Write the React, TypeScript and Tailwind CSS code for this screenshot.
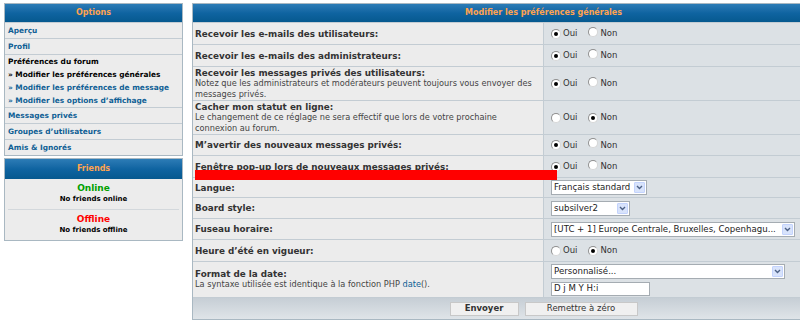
import React from 'react';

const font = "font-['DejaVu_Sans',Verdana,sans-serif]";

const Radio = ({ checked }: { checked?: boolean }) => (
  <span className="inline-flex h-[10px] w-[10px] shrink-0 items-center justify-center rounded-full border border-[#8f8f8f] border-b-[#d6d6d6] border-r-[#d6d6d6] bg-white">
    {checked && <span className="h-[4px] w-[4px] rounded-full bg-black" />}
  </span>
);

const YesNo = ({ yes }: { yes: boolean }) => (
  <div className="flex items-center text-[8.5px] text-[#333]">
    <Radio checked={yes} />
    <span className="ml-[2px]">Oui</span>
    <span className="ml-[11px]">
      <Radio checked={!yes} />
    </span>
    <span className="ml-[2px]">Non</span>
  </div>
);

const Select = ({ value, className }: { value: string; className: string }) => (
  <div className={`flex h-[15px] items-center justify-between border border-[#a5acb2] bg-white pl-[2px] pr-px text-[8.6px] text-[#222] ${className}`}>
    <span className="truncate">{value}</span>
    <span className="flex h-[11px] w-[11px] shrink-0 items-center justify-center rounded-[1px] border border-[#c3d3fd] bg-[#d8e3fb]">
      <svg width="7" height="5" viewBox="0 0 7 5">
        <path d="M1 1 L3.5 3.5 L6 1" fill="none" stroke="#4d6185" strokeWidth="1.4" />
      </svg>
    </span>
  </div>
);

const Header = ({ title, h = 'h-[18px]' }: { title: string; h?: string }) => (
  <div className={`flex ${h} items-center justify-center bg-gradient-to-b from-[#2c7cb6] via-[#0f64a1] to-[#06598f] text-[8px] font-bold text-[#ffa34f]`}>
    {title}
  </div>
);

const Label = ({ title, desc, h }: { title: string; desc?: React.ReactNode; h: string }) => (
  <div className={`flex ${h} flex-col justify-center bg-[#ececec] px-[2px]`}>
    <div className="text-[8.8px] font-bold leading-[10px] text-[#333]">{title}</div>
    {desc && <div className="text-[8.2px] leading-[11px] text-[#444]">{desc}</div>}
  </div>
);

const rows: { title: string; desc?: React.ReactNode; h: string; input: React.ReactNode }[] = [
  { title: 'Recevoir les e-mails des utilisateurs:', h: 'h-[21px]', input: <YesNo yes /> },
  { title: 'Recevoir les e-mails des administrateurs:', h: 'h-[21px]', input: <YesNo yes /> },
  {
    title: 'Recevoir les messages privés des utilisateurs:',
    desc: 'Notez que les administrateurs et modérateurs peuvent toujours vous envoyer des messages privés.',
    h: 'h-[33px]',
    input: <YesNo yes />,
  },
  {
    title: 'Cacher mon statut en ligne:',
    desc: 'Le changement de ce réglage ne sera effectif que lors de votre prochaine connexion au forum.',
    h: 'h-[33px]',
    input: <YesNo yes={false} />,
  },
  { title: 'M’avertir des nouveaux messages privés:', h: 'h-[20px]', input: <YesNo yes /> },
  { title: 'Fenêtre pop-up lors de nouveaux messages privés:', h: 'h-[21px]', input: <YesNo yes /> },
  { title: 'Langue:', h: 'h-[19px]', input: <Select value="Français standard" className="w-[96px]" /> },
  { title: 'Board style:', h: 'h-[20px]', input: <Select value="subsilver2" className="w-[79px]" /> },
  {
    title: 'Fuseau horaire:',
    h: 'h-[20px]',
    input: <Select value="[UTC + 1] Europe Centrale, Bruxelles, Copenhagu..." className="w-[244px]" />,
  },
  { title: 'Heure d’été en vigueur:', h: 'h-[21px]', input: <YesNo yes={false} /> },
  {
    title: 'Format de la date:',
    desc: (
      <>
        La syntaxe utilisée est identique à la fonction PHP <span className="text-[#0f5f95]">date</span>().
      </>
    ),
    h: 'h-[35px]',
    input: (
      <div className="flex flex-col gap-[3px]">
        <Select value="Personnalisé..." className="w-[234px]" />
        <div className="flex h-[14px] w-[99px] items-center border border-[#a5acb2] bg-white pl-[2px] text-[8.6px] text-[#222]">
          D j M Y H:i
        </div>
      </div>
    ),
  },
];

const SideRow = ({ children, h = 'h-[15px]' }: { children: React.ReactNode; h?: string }) => (
  <div className={`flex ${h} items-center bg-[#ececec] px-[3px] text-[7.4px] font-bold text-[#0f5f95]`}>{children}</div>
);

export default function App() {
  return (
    <div className={`flex h-[324px] w-[800px] items-start gap-[9px] overflow-hidden bg-white pl-[4px] pt-[3px] ${font}`}>
      {/* Sidebar */}
      <div className="flex w-[179px] shrink-0 flex-col gap-[2px]">
        <div className="flex flex-col gap-px border border-[#a9b8c2] bg-[#c3ccd3]">
          <Header title="Options" />
          <SideRow>Aperçu</SideRow>
          <SideRow>Profil</SideRow>
          <div className="flex h-[52px] flex-col justify-center gap-[1px] bg-[#ececec] px-[3px] text-[7.4px] font-bold leading-[12px]">
            <span className="text-black">Préférences du forum</span>
            <span className="text-black">» Modifier les préférences générales</span>
            <span className="text-[#0f5f95]">» Modifier les préférences de message</span>
            <span className="text-[#0f5f95]">» Modifier les options d’affichage</span>
          </div>
          <SideRow>Messages privés</SideRow>
          <SideRow>Groupes d’utilisateurs</SideRow>
          <SideRow>Amis &amp; Ignorés</SideRow>
        </div>

        <div className="flex flex-col border border-[#a9b8c2] bg-[#ececec]">
          <Header title="Friends" h="h-[20px]" />
          <div className="mx-[3px] flex h-[31px] flex-col items-center justify-center border-b border-[#d3d8dc] text-center">
            <span className="text-[9px] font-bold leading-[11px] text-[#00a000]">Online</span>
            <span className="text-[7px] font-bold leading-[11px] text-black">No friends online</span>
          </div>
          <div className="flex h-[30px] flex-col items-center justify-center text-center">
            <span className="text-[9px] font-bold leading-[11px] text-[#ff0000]">Offline</span>
            <span className="text-[7px] font-bold leading-[11px] text-black">No friends offline</span>
          </div>
        </div>
      </div>

      {/* Main form (wider than the window, cropped at the right edge) */}
      <div className="flex w-[703px] shrink-0 flex-col gap-px border border-[#a9b8c2] bg-[#c3ccd3]">
        <Header title="Modifier les préférences générales" />
        {rows.map((r, i) => (
          <div key={i} className="relative grid grid-cols-[350px_350px] gap-px">
            <Label title={r.title} desc={r.desc} h={r.h} />
            <div className="flex items-center bg-[#dce1e5] pl-[7px]">{r.input}</div>
            {i === 5 && <div className="absolute left-[2px] top-[14px] z-10 h-[10px] w-[362px] bg-[#ff0000]" />}
          </div>
        ))}
        <div className="flex h-[21px] items-center justify-center gap-[6px] bg-gradient-to-b from-[#c6ced5] to-[#dfe4e8]">
          <button className="flex h-[14px] w-[69px] items-center justify-center border border-[#c8c8c8] bg-[#f0f0f0] text-[8.5px] font-bold text-[#333]">
            Envoyer
          </button>
          <button className="flex h-[14px] w-[113px] items-center justify-center border border-[#c8c8c8] bg-[#f0f0f0] text-[8.5px] text-[#333]">
            Remettre à zéro
          </button>
        </div>
      </div>
    </div>
  );
}
